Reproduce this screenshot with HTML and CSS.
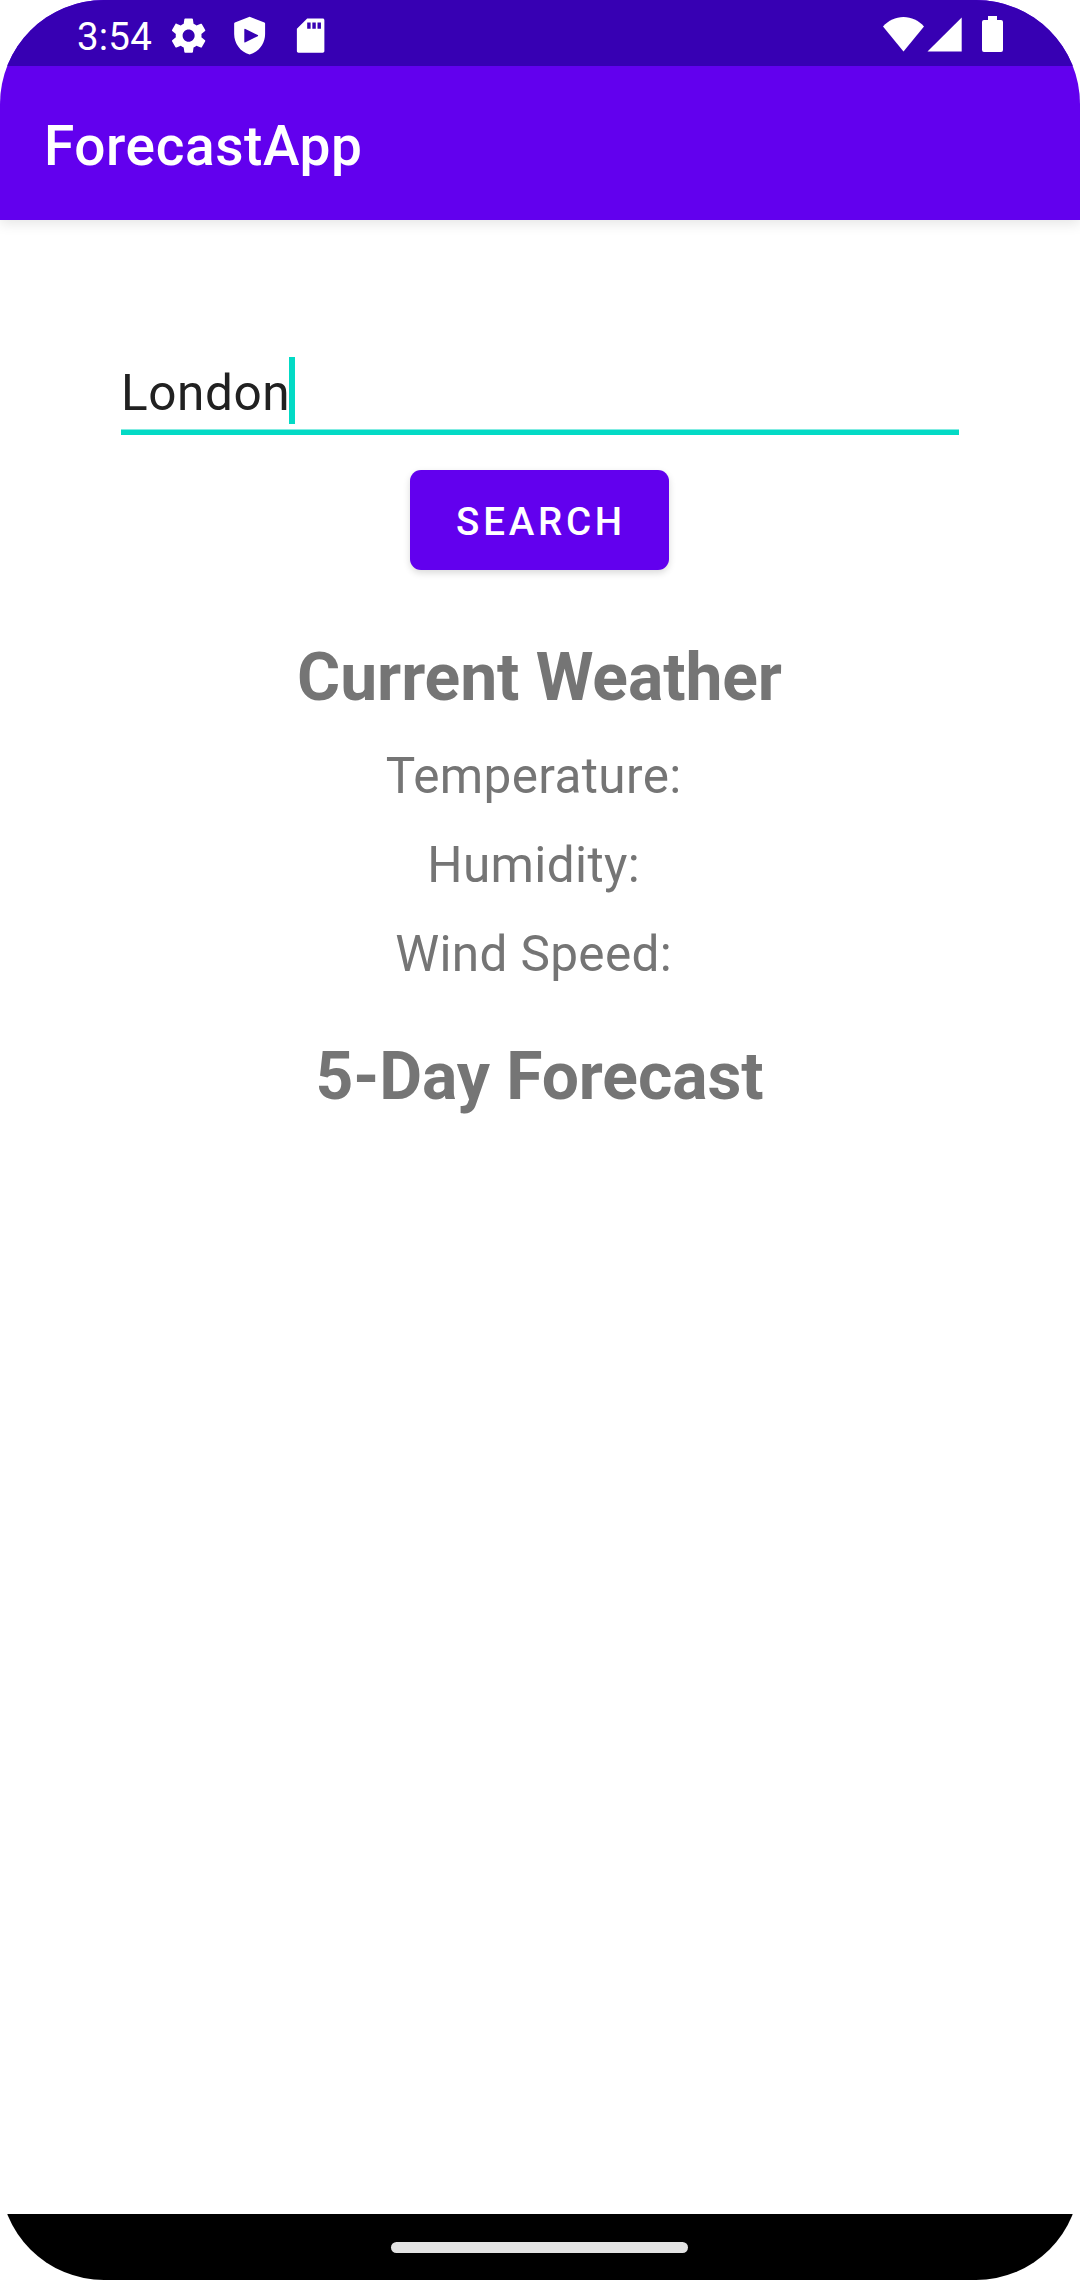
FILE: index.html
```html
<!DOCTYPE html>
<html lang="en">
<head>
<meta charset="utf-8">
<title>ForecastApp</title>
<link rel="stylesheet" href="styles.css">
</head>
<body>
<div class="screen">
  <header class="top">
    <div class="status-bar">
      <span class="clock">3:54</span>
      <div class="notifications">
        <svg class="status-icon" viewBox="0 0 24 24"><path d="M19.43 12.98c.04-.32.07-.64.07-.98s-.03-.66-.07-.98l2.11-1.65c.19-.15.24-.42.12-.64l-2-3.46c-.12-.22-.39-.3-.61-.22l-2.49 1c-.52-.4-1.08-.73-1.69-.98l-.38-2.65C14.46 2.18 14.25 2 14 2h-4c-.25 0-.46.18-.49.42l-.38 2.65c-.61.25-1.17.59-1.69.98l-2.49-1c-.23-.09-.49 0-.61.22l-2 3.46c-.13.22-.07.49.12.64l2.11 1.65c-.04.32-.07.65-.07.98s.03.66.07.98l-2.11 1.65c-.19.15-.24.42-.12.64l2 3.46c.12.22.39.3.61.22l2.49-1c.52.4 1.08.73 1.69.98l.38 2.65c.03.24.24.42.49.42h4c.25 0 .46-.18.49-.42l.38-2.65c.61-.25 1.17-.59 1.69-.98l2.49 1c.23.09.49 0 .61-.22l2-3.46c.12-.22.07-.49-.12-.64l-2.11-1.65zM12 15.5c-1.93 0-3.5-1.57-3.5-3.5s1.57-3.5 3.5-3.5 3.5 1.57 3.5 3.5-1.57 3.5-3.5 3.5z"/></svg>
        <svg class="status-icon" viewBox="0 0 24 24"><path fill-rule="evenodd" d="M12 1 3.400 4.300Q3 4.500 3 5V11c0 5.550 3.600 10.400 9 12 5.400-1.600 9-6.450 9-12V5q0-.5-.4-.7L12 1zM8.900 8.500v7q0 .7.700.4l7.100-3.600q.5-.3 0-.6L9.600 8.100q-.7-.3-.7.4z"/></svg>
        <svg class="status-icon" viewBox="0 0 24 24"><path d="M19 2h-9L4 8v13c0 .6.4 1 1 1h14c.6 0 1-.4 1-1V3c0-.6-.4-1-1-1zm-7 6h-2V4.3h2V8zm3 0h-2V4.3h2V8zm3 0h-2V4.3h2V8z"/></svg>
      </div>
      <div class="system">
        <svg class="wifi" viewBox="0 0 41 35"><path d="M20.5 34.5 0 9.500C5.500 3.500 12.500 0 20.500 0S35.500 3.500 41 9.500z"/></svg>
        <svg class="signal" viewBox="0 0 35 35"><path d="M.5 34.500 34.700.5v34z"/></svg>
        <svg class="battery" viewBox="0 0 21 36"><path d="M6 0h9v4h4a2 2 0 0 1 2 2v28a2 2 0 0 1-2 2H2a2 2 0 0 1-2-2V6a2 2 0 0 1 2-2h4z"/></svg>
      </div>
    </div>
    <h1 class="app-bar">ForecastApp</h1>
  </header>
  <main class="content">
    <div class="field"><span class="field-text">London</span><span class="caret"></span></div>
    <button class="search">SEARCH</button>
    <h2 class="heading">Current Weather</h2>
    <div class="readings">
      <p class="reading">Temperature: </p>
      <p class="reading">Humidity: </p>
      <p class="reading">Wind Speed: </p>
    </div>
    <h2 class="heading">5-Day Forecast</h2>
  </main>
  <footer class="nav-bar"><div class="nav-handle"></div></footer>
</div>
</body>
</html>
```
FILE: styles.css
```css
body {
  margin: 0;
  background: #fff;
  font-family: Roboto, sans-serif;
}

.screen {
  display: flex;
  flex-direction: column;
  width: 1080px;
  height: 2280px;
  overflow: hidden;
  border-radius: 104px;
  background: #fff;
}

.top {
  background: #6200ee;
  color: #fff;
  box-shadow: 0 4px 12px rgba(0, 0, 0, 0.1);
}

.status-bar {
  display: flex;
  align-items: flex-start;
  box-sizing: border-box;
  height: 66px;
  padding: 0 77px;
  background: #3700b3;
}

.status-bar svg {
  display: block;
  fill: #fff;
}

.clock {
  width: 90.65px;
  margin-top: 13px;
  font-size: 38.5px;
  line-height: 48px;
  letter-spacing: 0.2px;
}

.notifications {
  display: flex;
  gap: 19.75px;
  margin-top: 14.65px;
}

.status-icon {
  width: 41.25px;
  height: 41.25px;
}

.system {
  display: flex;
  align-items: flex-start;
  margin-left: auto;
}

.wifi {
  width: 41px;
  height: 35px;
  margin-top: 17px;
}

.signal {
  width: 35px;
  height: 35px;
  margin: 17px 20px 0 3px;
}

.battery {
  width: 21px;
  height: 36px;
  margin-top: 16px;
}

.app-bar {
  height: 154px;
  margin: 0;
  padding-left: 44px;
  font-size: 55px;
  font-weight: 500;
  line-height: 160px;
  letter-spacing: 0.58px;
}

.content {
  display: flex;
  flex: 1;
  flex-direction: column;
  align-items: center;
  padding-top: 137px;
}

.field {
  display: flex;
  box-sizing: border-box;
  width: 838px;
  height: 78px;
  border-bottom: 5px solid #03dac5;
  box-shadow: inset 0 -1px #81ece2;
}

.field-text {
  width: 168px;
  color: #212121;
  font-size: 49.5px;
  line-height: 72px;
  letter-spacing: 0.6px;
}

.caret {
  width: 6px;
  height: 67px;
  background: #03dac5;
}

.search {
  width: 259px;
  height: 100px;
  margin: 35px 1px 66px 0;
  padding: 4px 0 0 3px;
  border: 0;
  border-radius: 11px;
  background: #6200ee;
  box-shadow: 0 3px 7px rgba(0, 0, 0, 0.15);
  color: #fff;
  font: 500 38.5px/96px Roboto, sans-serif;
  letter-spacing: 3.75px;
}

.heading {
  margin: 0 1px 0 0;
  color: #757575;
  font-size: 66px;
  font-weight: 700;
  line-height: 84px;
  letter-spacing: -0.08px;
}

.readings {
  margin: 12px 0 36px;
}

.reading {
  margin: 0;
  color: #757575;
  font-size: 49.5px;
  line-height: 89px;
  letter-spacing: 0.35px;
  text-align: center;
  white-space: pre;
}

.nav-bar {
  display: flex;
  justify-content: center;
  align-items: center;
  height: 66px;
  background: #000;
}

.nav-handle {
  width: 297px;
  height: 11px;
  margin-right: 1px;
  border-radius: 6px;
  background: #e2e2e2;
}
```
